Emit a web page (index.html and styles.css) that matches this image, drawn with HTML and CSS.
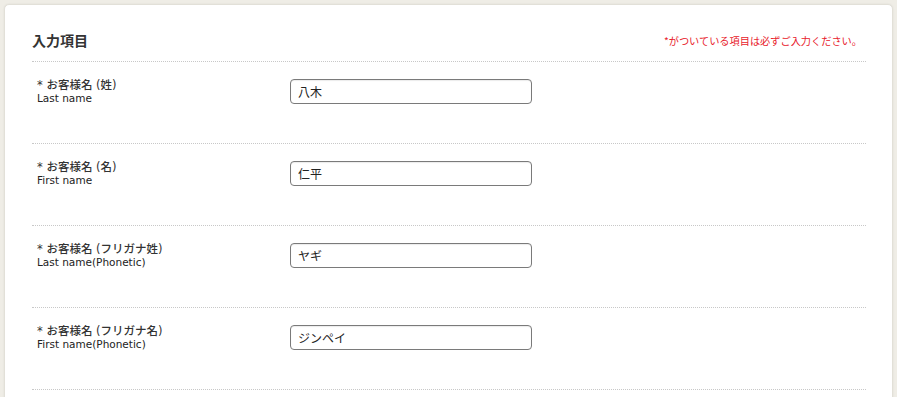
FILE: index.html
```html
<!DOCTYPE html>
<html lang="ja">
<head>
  <meta charset="UTF-8">
  <meta name="viewport" content="width=device-width, initial-scale=1.0">
  <title>入力項目</title>
  <link rel="stylesheet" href="styles.css">
</head>
<body>
  <div class="panel">
    <div class="panel-head">
      <h2>入力項目</h2>
      <p class="note">*がついている項目は必ずご入力ください。</p>
    </div>

    <div class="row">
      <label class="field-label" for="lastName">
        <span class="ja">* お客様名 (姓)</span>
        <span class="en">Last name</span>
      </label>
      <input type="text" id="lastName" value="八木">
    </div>

    <div class="row">
      <label class="field-label" for="firstName">
        <span class="ja">* お客様名 (名)</span>
        <span class="en">First name</span>
      </label>
      <input type="text" id="firstName" value="仁平">
    </div>

    <div class="row">
      <label class="field-label" for="lastKana">
        <span class="ja">* お客様名 (フリガナ姓)</span>
        <span class="en">Last name(Phonetic)</span>
      </label>
      <input type="text" id="lastKana" value="ヤギ">
    </div>

    <div class="row">
      <label class="field-label" for="firstKana">
        <span class="ja">* お客様名 (フリガナ名)</span>
        <span class="en">First name(Phonetic)</span>
      </label>
      <input type="text" id="firstKana" value="ジンペイ">
    </div>
  </div>
</body>
</html>
```

FILE: styles.css
```css
body {
  margin: 0;
  background: #efede6;
  font-family: 'DejaVu Sans', 'Noto Sans CJK JP', sans-serif;
  color: #222;
}
.panel {
  margin: 4px 4px 0 4px;
  padding: 0 26px 40px 27px;
  background: #fff;
  border: 1px solid #e2e0d8;
  border-radius: 5px;
  box-shadow: 0 0 2px rgba(0, 0, 0, 0.08);
}
.panel-head {
  display: flex;
  justify-content: space-between;
  align-items: center;
  padding: 25px 4px 11px 0;
  border-bottom: 1px dotted #c8c8c8;
}
.panel-head h2 {
  margin: 0;
  font-family: 'Noto Sans CJK JP', sans-serif;
  font-size: 14px;
  line-height: 20px;
  font-weight: bold;
  color: #333;
}
.note {
  margin: 0;
  font-family: 'Noto Sans CJK JP', sans-serif;
  font-size: 10.2px;
  color: #e8202a;
}
.row {
  display: flex;
  align-items: flex-start;
  box-sizing: border-box;
  height: 82px;
  padding-top: 16px;
  border-bottom: 1px dotted #c8c8c8;
}
.field-label {
  display: flex;
  flex-direction: column;
  width: 253px;
  margin-top: 1px;
  padding-left: 5px;
  font-size: 11px;
  line-height: 13px;
}
.field-label .ja {
  font-family: 'DejaVu Sans', 'Noto Sans CJK JP', sans-serif;
  font-size: 11.5px;
  font-weight: 500;
  color: #333;
}
.field-label .en {
  font-size: 10.5px;
  color: #222;
}
input {
  box-sizing: border-box;
  width: 242px;
  height: 25px;
  margin-top: 1px;
  padding: 0 7px;
  border: 1px solid #7a7a7a;
  border-radius: 4px;
  box-shadow: inset 0 1px 1px rgba(0, 0, 0, 0.08);
  font-family: 'Noto Sans CJK JP', sans-serif;
  font-size: 12px;
  color: #222;
  background: #fff;
}
```
